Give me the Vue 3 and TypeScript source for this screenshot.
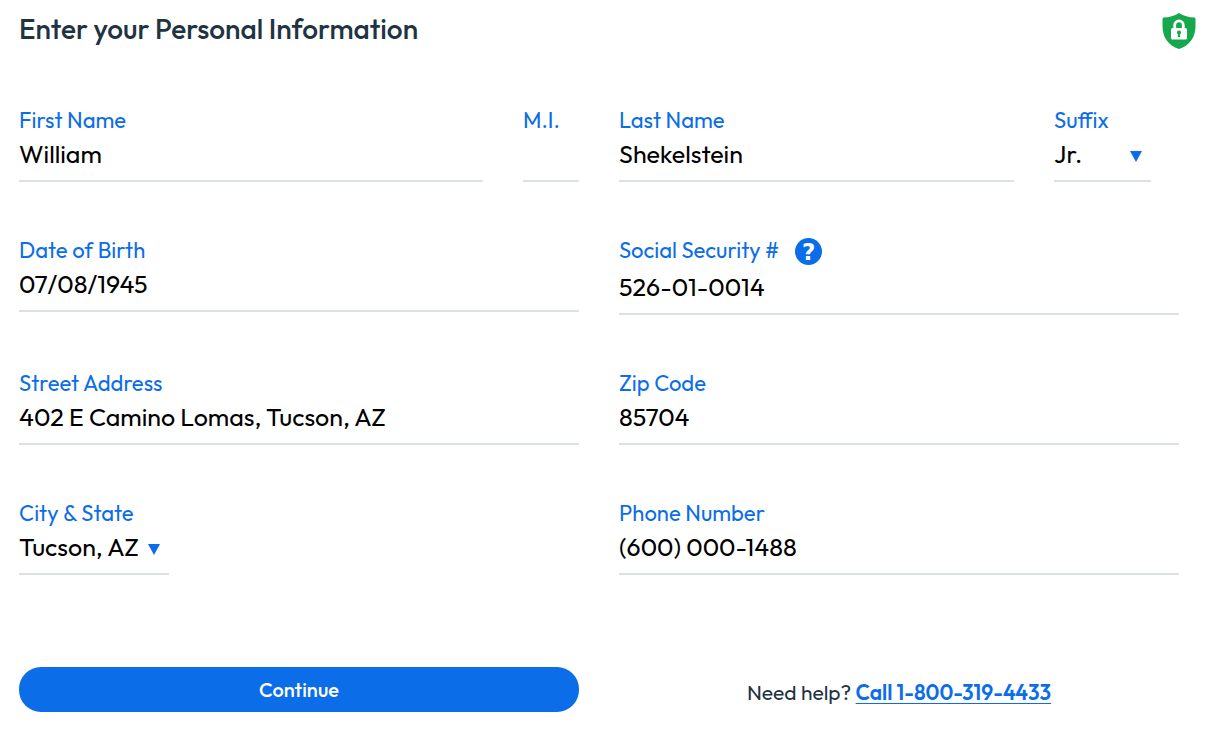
<script setup lang="ts">
import { ref } from 'vue'

const firstName = ref('William')
const middleInitial = ref('')
const lastName = ref('Shekelstein')
const suffix = ref('Jr.')
const birthDate = ref('07/08/1945')
const ssn = ref('526-01-0014')
const street = ref('402 E Camino Lomas, Tucson, AZ')
const zip = ref('85704')
const city = ref('Tucson, AZ')
const phone = ref('(600) 000-1488')
</script>

<template>
  <main class="page">
    <header class="header">
      <h1>Enter your Personal Information</h1>
      <svg class="shield" viewBox="0 0 34 38" role="img" aria-label="Secure form">
        <path d="M17 1C12.500 4 7 5.300 1.500 5.500Q.5 5.600.5 7V14C.5 25 6 33.500 17 37C28 33.500 33.500 25 33.500 14V7Q33.500 5.600 32.500 5.500C27 5.300 21.500 4 17 1Z" fill="#16a84c" />
        <path d="M12.700 17V13.200A4.300 4.300 0 0 1 21.300 13.200V17" fill="none" stroke="#fff" stroke-width="2.800" />
        <rect x="9" y="16" width="16" height="11.500" rx="1.600" fill="#fff" />
        <path d="M17 18.500a2 2 0 0 1 1.100 3.700V25h-2.200v-2.800a2 2 0 0 1 1.100-3.700Z" fill="#16a84c" />
      </svg>
    </header>

    <form class="form" @submit.prevent>
      <div class="grid">
        <div class="group">
          <div class="field grow">
            <label for="first">First Name</label>
            <input id="first" v-model="firstName" type="text" />
          </div>
          <div class="field initial">
            <label for="mi">M.I.</label>
            <input id="mi" v-model="middleInitial" type="text" maxlength="1" />
          </div>
        </div>
        <div class="group last">
          <div class="field grow">
            <label for="last">Last Name</label>
            <input id="last" v-model="lastName" type="text" />
          </div>
          <div class="field suffix">
            <label for="suffix">Suffix</label>
            <div class="select">
              <select id="suffix" v-model="suffix">
                <option>Jr.</option>
                <option>Sr.</option>
              </select>
              <svg class="arrow" viewBox="0 0 12 11" aria-hidden="true"><path d="M0 0H12L6 11Z" /></svg>
            </div>
          </div>
        </div>

        <div class="field">
          <label for="dob">Date of Birth</label>
          <input id="dob" v-model="birthDate" type="text" />
        </div>
        <div class="field">
          <div class="label-row">
            <label for="ssn">Social Security #</label>
            <button class="help" type="button" aria-label="About your Social Security number">?</button>
          </div>
          <input id="ssn" v-model="ssn" type="text" />
        </div>

        <div class="field">
          <label for="street">Street Address</label>
          <input id="street" v-model="street" type="text" />
        </div>
        <div class="field">
          <label for="zip">Zip Code</label>
          <input id="zip" v-model="zip" type="text" />
        </div>

        <div class="field city">
          <label for="city">City &amp; State</label>
          <div class="select">
            <select id="city" v-model="city">
              <option>Tucson, AZ</option>
            </select>
            <svg class="arrow" viewBox="0 0 12 11" aria-hidden="true"><path d="M0 0H12L6 11Z" /></svg>
          </div>
        </div>
        <div class="field">
          <label for="phone">Phone Number</label>
          <input id="phone" v-model="phone" type="tel" />
        </div>
      </div>

      <div class="actions">
        <button class="continue" type="submit">Continue</button>
        <p class="call">Need help? <a href="tel:18003194433">Call 1-800-319-4433</a></p>
      </div>
    </form>
  </main>
</template>

<style>
body {
  margin: 0;
  background: #fff;
}
</style>

<style scoped>
.page {
  font-family: Outfit, Lato, sans-serif;
  color: #1f3442;
  padding: 12px 28px 40px 19px;
}

.header {
  display: flex;
  justify-content: space-between;
  align-items: flex-start;
  margin-right: -17px;
}

h1 {
  margin: 0;
  font-size: 28px;
  line-height: 34px;
  font-weight: 500;
}

.shield {
  width: 34px;
  height: 38px;
}

.form {
  margin-top: 54px;
}

.grid {
  display: grid;
  grid-template-columns: 1fr 1fr;
  gap: 52px 40px;
  align-items: start;
}

.group {
  display: flex;
  gap: 40px;
  min-width: 0;
}

.last {
  padding-right: 28px;
}

.field {
  display: flex;
  flex-direction: column;
  min-width: 0;
}

.grow {
  flex: 1;
}

.initial {
  width: 56px;
}

.suffix {
  width: 97px;
}

.city {
  width: 150px;
}

label {
  color: #0c6de8;
  font-size: 22px;
  line-height: 32px;
}

.label-row {
  display: flex;
  align-items: flex-start;
  gap: 16px;
  height: 35px;
}

.help {
  width: 27px;
  height: 27px;
  margin-top: 4px;
  padding: 2px 0 0;
  border: 0;
  border-radius: 50%;
  background: #0c6de8;
  color: #fff;
  font-family: "DejaVu Sans", sans-serif;
  font-size: 23px;
  line-height: 25px;
  font-weight: 700;
}

input,
select {
  box-sizing: border-box;
  width: 100%;
  height: 46px;
  margin: 0;
  padding: 0 0 8px;
  border: 0;
  border-bottom: 2px solid #dce2e2;
  border-radius: 0;
  background: transparent;
  color: #000;
  font-family: inherit;
  font-size: 25px;
  appearance: none;
}

.select {
  position: relative;
}

.arrow {
  position: absolute;
  right: 9px;
  top: 15px;
  width: 12px;
  height: 11px;
  fill: #0c6de8;
  pointer-events: none;
}

.actions {
  display: grid;
  grid-template-columns: 1fr 1fr;
  gap: 40px;
  align-items: center;
  margin-top: 92px;
}

.continue {
  height: 45px;
  border: 0;
  border-radius: 22px;
  background: #0c6de8;
  color: #fff;
  font-family: inherit;
  font-size: 20px;
  font-weight: 500;
}

.call {
  margin: 4px 0 0;
  font-size: 21px;
  line-height: 28px;
  text-align: center;
}

.call a {
  color: #0c6de8;
  font-weight: 600;
  text-decoration-thickness: 1px;
  text-underline-offset: 3px;
}
</style>
